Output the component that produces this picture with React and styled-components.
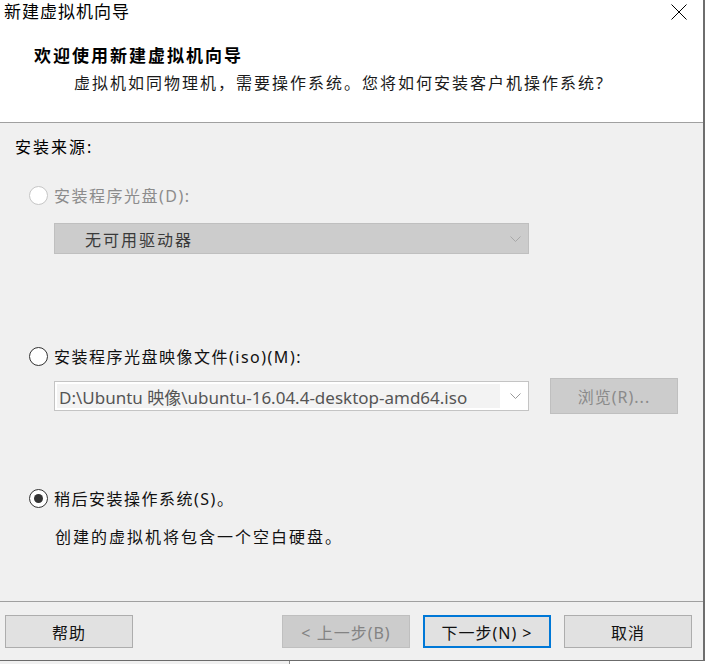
import React from 'react';
import styled, { createGlobalStyle } from 'styled-components';

const FONT = `"Noto Sans", "Noto Sans CJK SC", sans-serif`;

const Global = createGlobalStyle`
  html, body { margin: 0; padding: 0; background: #fff; }
  * { box-sizing: border-box; }
  #root { width: 705px; height: 664px; overflow: hidden; }
`;

const Frame = styled.div`
  width: 705px;
  height: 664px;
  display: flex;
  flex-direction: column;
  font-family: ${FONT};
  color: #000;
`;

const WindowRow = styled.div`
  display: flex;
  height: 661px;
`;

const Window = styled.div`
  flex: 1;
  display: flex;
  flex-direction: column;
  border-bottom: 1px solid #6b6b6b;
`;

const EdgeLine = styled.div`
  width: 2px;
  background: #6e6e6e;
`;

const TitleBar = styled.div`
  height: 24px;
  display: flex;
  align-items: center;
  justify-content: space-between;
  padding: 0 16px 0 4px;
  background: #fff;
`;

const TitleText = styled.div`
  font-size: 17px;
  letter-spacing: 1px;
  line-height: 24px;
`;

const Header = styled.div`
  height: 99px;
  background: #fff;
  border-bottom: 1px solid #a0a0a0;
  padding-top: 22px;
`;

const Heading = styled.div`
  padding-left: 34px;
  font-size: 17px;
  font-weight: 700;
  letter-spacing: 2px;
  line-height: 20px;
`;

const SubTitle = styled.div`
  padding-left: 74px;
  margin-top: 7px;
  font-size: 16px;
  letter-spacing: 2px;
  line-height: 20px;
  color: #1a1a1a;
`;

const Body = styled.div`
  flex: 1;
  background: #f0f0f0;
  border-bottom: 1px solid #a0a0a0;
  padding-top: 14px;
  display: flex;
  flex-direction: column;
`;

const SectionLabel = styled.div`
  padding-left: 15px;
  font-size: 16px;
  letter-spacing: 2px;
  line-height: 20px;
`;

const RadioRow = styled.label`
  display: flex;
  align-items: center;
  gap: 6px;
  margin-left: 29px;
  margin-top: ${p => p.$top}px;
  height: 20px;
  font-size: 16px;
  letter-spacing: 1.5px;
  color: ${p => (p.$disabled ? '#8c8c8c' : '#111')};
`;

const RadioCircle = styled.span`
  width: 19px;
  height: 19px;
  border-radius: 50%;
  border: 1px solid ${p => (p.$disabled ? '#c6c6c6' : '#333')};
  background: #fff;
  display: flex;
  align-items: center;
  justify-content: center;
  flex: none;
`;

const RadioDot = styled.span`
  width: 9px;
  height: 9px;
  border-radius: 50%;
  background: #333;
`;

const DisabledCombo = styled.div`
  margin-left: 54px;
  margin-top: 18px;
  width: 475px;
  height: 31px;
  background: #cccccc;
  border: 1px solid #bfbfbf;
  display: flex;
  align-items: center;
  justify-content: space-between;
  padding: 0 7px 0 30px;
  font-size: 16px;
  letter-spacing: 2px;
  color: #3a3a3a;
`;

const ComboRow = styled.div`
  margin-left: 54px;
  margin-top: 12px;
  height: 36px;
  display: flex;
  align-items: center;
  gap: 21px;
`;

const Combo = styled.div`
  width: 475px;
  height: 30px;
  background: #fff;
  border: 1px solid #c4c4c4;
  display: flex;
  align-items: center;
  padding: 2px 7px 2px 2px;
  gap: 10px;
`;

const ComboField = styled.div`
  flex: 1;
  height: 100%;
  background: #f3f3f3;
  display: flex;
  align-items: center;
  padding-left: 2px;
  font-size: 17px;
  color: #555;
  white-space: nowrap;
  overflow: hidden;
`;

const SideButton = styled.div`
  width: 128px;
  height: 36px;
  background: #cccccc;
  border: 1px solid #bfbfbf;
  display: flex;
  align-items: center;
  justify-content: center;
  font-size: 16px;
  letter-spacing: 1px;
  color: #8a8a8a;
`;

const Desc = styled.div`
  margin-top: 19px;
  padding-left: 55px;
  font-size: 16px;
  letter-spacing: 2px;
  line-height: 20px;
  color: #111;
`;

const Footer = styled.div`
  height: 58px;
  background: #f0f0f0;
  display: flex;
  align-items: flex-start;
  padding: 13px 0 0 5px;
`;

const Button = styled.div`
  width: 128px;
  height: 33px;
  margin-left: ${p => p.$left || 0}px;
  background: ${p => (p.$disabled ? '#cccccc' : '#e1e1e1')};
  border: ${p => (p.$primary ? '2px solid #0078d7' : p.$disabled ? '1px solid #bfbfbf' : '1px solid #adadad')};
  display: flex;
  align-items: center;
  justify-content: center;
  font-size: 16px;
  letter-spacing: 1px;
  color: ${p => (p.$disabled ? '#838383' : '#111')};
`;

const BottomStrip = styled.div`
  height: 3px;
  display: flex;
`;

const StripLeft = styled.div`
  width: 290px;
  background: #f0f0f0;
  border-right: 1px solid #8a8a8a;
`;

const StripRight = styled.div`
  flex: 1;
  background: #fff;
`;

const Chevron = ({ color }) => (
  <svg width="11" height="6" viewBox="0 0 11 6">
    <polyline points="0.5,0.5 5.5,5.5 10.5,0.5" fill="none" stroke={color} strokeWidth="1" />
  </svg>
);

const CloseIcon = () => (
  <svg width="16" height="16" viewBox="0 0 16 16">
    <line x1="0.5" y1="0.5" x2="15.5" y2="15.5" stroke="#000" strokeWidth="1" />
    <line x1="15.5" y1="0.5" x2="0.5" y2="15.5" stroke="#000" strokeWidth="1" />
  </svg>
);

const Radio = ({ top, disabled, checked, children }) => (
  <RadioRow $top={top} $disabled={disabled}>
    <RadioCircle $disabled={disabled}>{checked && <RadioDot />}</RadioCircle>
    <span>{children}</span>
  </RadioRow>
);

export default function App() {
  return (
    <Frame>
      <Global />
      <WindowRow>
        <Window>
          <TitleBar>
            <TitleText>新建虚拟机向导</TitleText>
            <CloseIcon />
          </TitleBar>
          <Header>
            <Heading>欢迎使用新建虚拟机向导</Heading>
            <SubTitle>虚拟机如同物理机，需要操作系统。您将如何安装客户机操作系统?</SubTitle>
          </Header>
          <Body>
            <SectionLabel>安装来源:</SectionLabel>
            <Radio top={28} disabled>安装程序光盘(D):</Radio>
            <DisabledCombo>
              <span>无可用驱动器</span>
              <Chevron color="#a8a8a8" />
            </DisabledCombo>
            <Radio top={92}>安装程序光盘映像文件(iso)(M):</Radio>
            <ComboRow>
              <Combo>
                <ComboField>D:\Ubuntu 映像\ubuntu-16.04.4-desktop-amd64.iso</ComboField>
                <Chevron color="#999" />
              </Combo>
              <SideButton>浏览(R)...</SideButton>
            </ComboRow>
            <Radio top={74} checked>稍后安装操作系统(S)。</Radio>
            <Desc>创建的虚拟机将包含一个空白硬盘。</Desc>
          </Body>
          <Footer>
            <Button>帮助</Button>
            <Button $left={149} $disabled>&lt; 上一步(B)</Button>
            <Button $left={13} $primary>下一步(N) &gt;</Button>
            <Button $left={13}>取消</Button>
          </Footer>
        </Window>
        <EdgeLine />
      </WindowRow>
      <BottomStrip>
        <StripLeft />
        <StripRight />
      </BottomStrip>
    </Frame>
  );
}
